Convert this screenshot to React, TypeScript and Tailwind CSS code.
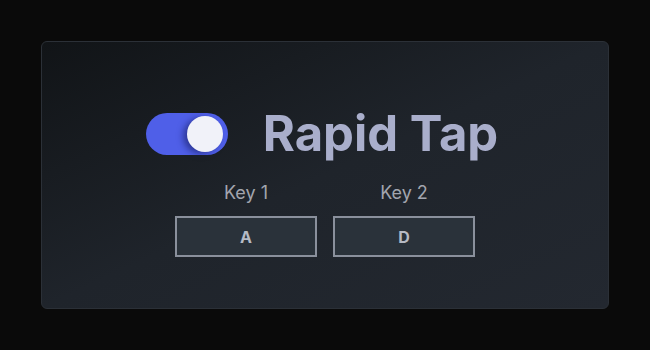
import { useState } from 'react'

function Toggle({ on, onChange }: { on: boolean; onChange: (v: boolean) => void }) {
  return (
    <button
      type="button"
      onClick={() => onChange(!on)}
      className={`relative h-[42px] w-[82px] rounded-full ${on ? 'bg-[#4f5fe8]' : 'bg-[#3a3f48]'}`}
    >
      <span
        className={`absolute top-[3px] h-[36px] w-[36px] rounded-full bg-[#f1f2f9] shadow-[-4px_2px_6px_rgba(20,25,90,0.55)] ${on ? 'left-[41px]' : 'left-[4px]'}`}
      />
    </button>
  )
}

function KeyField({ label, value }: { label: string; value: string }) {
  return (
    <div className="flex flex-col items-center gap-[12px]">
      <span className="text-[18px] leading-[22px] text-[#a2a5ae]">{label}</span>
      <div className="flex h-[41px] w-[142px] items-center justify-center border-2 border-[#8a909c] bg-[#2a323a] text-[16px] font-bold text-[#b6bac4]">
        {value}
      </div>
    </div>
  )
}

export default function App() {
  const [on, setOn] = useState(true)
  return (
    <div
      className="flex h-[350px] w-[650px] bg-[#0a0a0a] p-[41px]"
      style={{ fontFamily: 'Inter, "Noto Sans", sans-serif' }}
    >
      <div className="flex flex-1 flex-col items-center rounded-md border border-[#2b3037] bg-gradient-to-br from-[#111417] via-[#1f242b] to-[#232830] pt-[67px]">
        <div className="-ml-[6px] flex items-center gap-[35px]">
          <Toggle on={on} onChange={setOn} />
          <h1 className="text-[49px] font-bold leading-none text-[#a9aecb]">Rapid Tap</h1>
        </div>
        <div className="mt-[24px] flex gap-[16px]">
          <KeyField label="Key 1" value="A" />
          <KeyField label="Key 2" value="D" />
        </div>
      </div>
    </div>
  )
}
